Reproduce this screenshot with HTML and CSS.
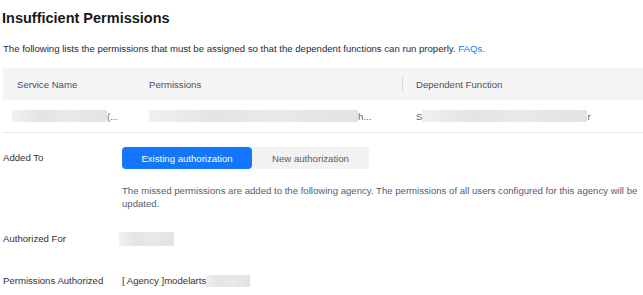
FILE: index.html
```html
<!DOCTYPE html>
<html lang="en">
<head>
    <meta charset="UTF-8">
    <title>Insufficient Permissions</title>
    <link rel="stylesheet" href="styles.css">
</head>
<body>
    <div class="perm-dialog">
        <h1>Insufficient Permissions</h1>
        <p class="intro">The following lists the permissions that must be assigned so that the dependent functions can run properly. <a href="#">FAQs.</a></p>

        <div class="perm-table">
            <div class="perm-row head">
                <div class="cell col-service">Service Name</div>
                <div class="cell col-perm">Permissions</div>
                <div class="cell col-func">Dependent Function</div>
            </div>
            <div class="perm-row">
                <div class="cell col-service"><span class="mask" style="width: 95px"></span><span class="tail">(...</span></div>
                <div class="cell col-perm"><span class="mask" style="width: 209px"></span><span class="tail">h...</span></div>
                <div class="cell col-func"><span class="tail">S</span><span class="mask" style="width: 165px"></span><span class="tail">r</span></div>
            </div>
        </div>

        <div class="form-row row-added">
            <div class="form-label">Added To</div>
            <div class="form-control">
                <div class="switch-group">
                    <button class="switch-btn active">Existing authorization</button>
                    <button class="switch-btn">New authorization</button>
                </div>
                <p class="hint">The missed permissions are added to the following agency. The permissions of all users configured for this agency will be updated.</p>
            </div>
        </div>

        <div class="form-row row-for">
            <div class="form-label">Authorized For</div>
            <div class="form-control"><span class="mask shifted" style="width: 55px"></span></div>
        </div>

        <div class="form-row row-auth">
            <div class="form-label">Permissions Authorized</div>
            <div class="form-control">[ Agency ]modelarts<span class="mask" style="width: 44px"></span></div>
        </div>
    </div>
</body>
</html>
```

FILE: styles.css
```css
* {
    margin: 0;
    padding: 0;
    box-sizing: border-box;
    font-family: 'Liberation Sans', Arial, sans-serif;
}

body {
    background-color: #fff;
    color: #252b3a;
    font-size: 9.6px;
}

.perm-dialog {
    width: 643px;
    padding: 10px 0 0 3px;
}

h1 {
    font-size: 14.5px;
    font-weight: bold;
    color: #191919;
    line-height: 16px;
    margin-left: -1px;
}

.intro {
    margin-top: 17px;
    line-height: 12px;
    color: #252b3a;
}

.intro a {
    color: #1476ff;
    text-decoration: none;
}

.perm-table {
    margin-top: 13px;
}

.perm-row {
    display: flex;
    height: 33px;
    align-items: center;
    border-bottom: 1px solid #ebebeb;
}

.perm-row.head {
    height: 32px;
    background-color: #f5f5f5;
    border-bottom: none;
}

.cell {
    display: flex;
    align-items: center;
    white-space: nowrap;
    color: #575d6c;
}

.perm-row.head .cell {
    color: #4a4f5c;
}

.col-service {
    width: 132px;
    padding-left: 14px;
}

.perm-row:not(.head) .col-service {
    padding-left: 9px;
}

.col-perm {
    width: 268px;
    padding-left: 14px;
    position: relative;
    height: 100%;
}

.perm-row.head .col-perm::after {
    content: '';
    position: absolute;
    right: 0;
    top: 8px;
    width: 1px;
    height: 16px;
    background-color: #dcdcdc;
}

.col-func {
    flex: 1;
    padding-left: 13px;
}

.mask {
    display: inline-block;
    height: 12px;
    background: linear-gradient(90deg, #f1f1f1, #e4e4e4 30%, #e9e9e9 60%, #e2e2e2);
    filter: blur(0.6px);
}

.mask.shifted {
    margin-left: -3px;
    height: 14px;
}

.tail {
    color: #575d6c;
}

.form-row {
    display: flex;
    align-items: flex-start;
}

.form-label {
    width: 119px;
    line-height: 22px;
    color: #333;
}

.form-control {
    flex: 1;
    line-height: 22px;
    color: #333;
    display: flex;
    flex-direction: column;
}

.row-added {
    margin-top: 14px;
}

.switch-group {
    display: flex;
}

.switch-btn {
    height: 22px;
    border: none;
    font-size: 9.6px;
    font-family: 'Liberation Sans', Arial, sans-serif;
    background-color: #f2f2f2;
    color: #575d6c;
    width: 117px;
    border-radius: 0 4px 4px 0;
}

.switch-btn.active {
    width: 130px;
    background-color: #1476ff;
    color: #fff;
    border-radius: 4px;
}

.hint {
    margin-top: 15px;
    line-height: 13px;
    color: #575d6c;
}

.row-for {
    margin-top: 18px;
}

.row-for .form-control,
.row-auth .form-control {
    flex-direction: row;
    align-items: center;
    height: 22px;
}

.row-auth {
    margin-top: 20px;
}
```
